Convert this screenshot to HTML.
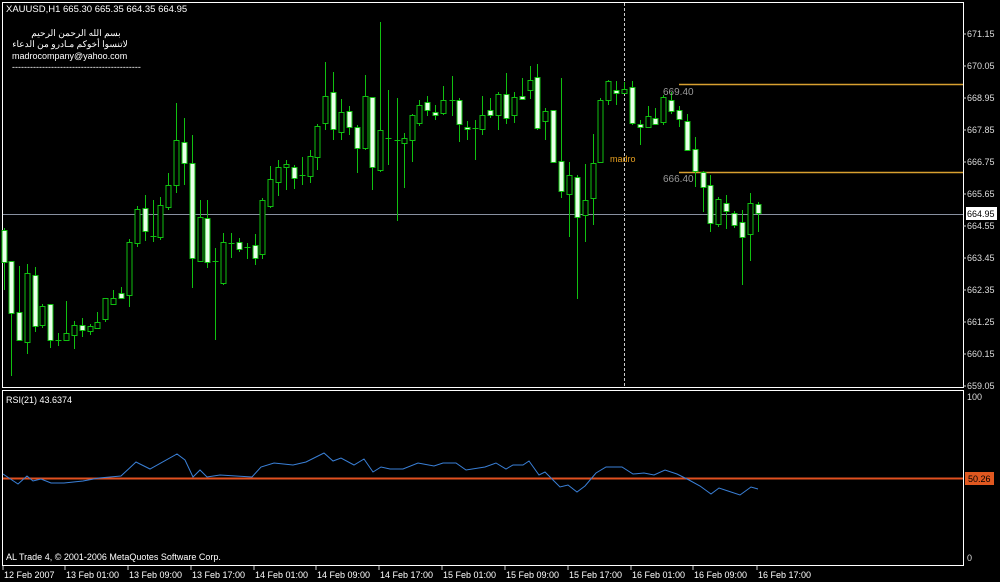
<!DOCTYPE html>
<html><head><meta charset="utf-8"><style>
html,body{margin:0;padding:0;background:#000;width:1000px;height:582px;overflow:hidden}
svg{display:block}
text{font-family:"Liberation Sans","Noto Sans CJK SC",sans-serif;font-size:9px;fill:#fff}
.ax{font-size:9px;fill:#ddd}
.w rect{fill:#eaffea}
.h rect{fill:#000}
</style></head><body>
<svg width="1000" height="582" viewBox="0 0 1000 582">
<rect x="0" y="0" width="1000" height="582" fill="#000"/>
<rect x="2.5" y="2.5" width="961" height="385" fill="none" stroke="#fff" stroke-width="1"/>
<rect x="2.5" y="390.5" width="961" height="175" fill="none" stroke="#fff" stroke-width="1"/>
<line x1="624.5" y1="3" x2="624.5" y2="387" stroke="#ccc" stroke-width="1" stroke-dasharray="3,2"/>
<line x1="3" y1="214.5" x2="963" y2="214.5" stroke="#8890a0" stroke-width="1"/>
<line x1="679" y1="84.5" x2="963" y2="84.5" stroke="#d8a030" stroke-width="1.5"/>
<line x1="679" y1="172.5" x2="963" y2="172.5" stroke="#d8a030" stroke-width="1.5"/>
<g stroke="#10c010" stroke-width="1">
<path fill="none" d="M4.5 228V290 M11.5 261V376 M19.5 266V341 M27.5 264V354 M35.5 267V332 M42.5 304V328 M50.5 304V348 M58.5 333V346 M66.5 301V340 M74.5 321V349 M82.5 318V337 M90.5 324V335 M97.5 312V329 M105.5 298V322 M113.5 290V305 M121.5 287V299 M129.5 239V307 M137.5 206V247 M145.5 195V241 M153.5 200V242 M160.5 197V240 M168.5 173V210 M176.5 103V193 M184.5 118V185 M192.5 135V288 M200.5 200V262 M207.5 200V268 M215.5 248V340 M223.5 233V285 M231.5 233V258 M239.5 238V252 M247.5 243V259 M255.5 234V265 M262.5 198V259 M270.5 166V208 M278.5 160V196 M286.5 160V190 M294.5 165V189 M302.5 157V185 M310.5 150V183 M317.5 124V170 M325.5 62V130 M333.5 72V140 M341.5 99V140 M349.5 106V135 M357.5 125V173 M365.5 75V150 M372.5 97V190 M380.5 22V172 M388.5 90V165 M397.5 98V221 M404.5 133V188 M412.5 114V162 M419.5 100V126 M427.5 96V116 M435.5 105V120 M443.5 86V115 M452.5 76V116 M459.5 98V142 M467.5 121V140 M475.5 120V160 M482.5 96V135 M490.5 98V118 M498.5 92V130 M506.5 73V124 M514.5 92V123 M522.5 78V99 M530.5 66V99 M537.5 64V130 M545.5 108V140 M553.5 110V162 M561.5 78V198 M569.5 162V237 M577.5 175V299 M585.5 164V242 M593.5 134V225 M600.5 98V162 M608.5 80V105 M616.5 81V105 M624.5 82V90 M632.5 81V125 M640.5 120V145 M648.5 106V128 M655.5 108V125 M663.5 95V125 M671.5 92V114 M679.5 106V127 M687.5 114V150 M695.5 137V187 M703.5 171V212 M710.5 175V232 M718.5 197V227 M726.5 195V229 M734.5 211V228 M742.5 210V285 M750.5 193V261 M758.5 202V232 M55.5 340.5H61.5 M150.5 236.5H156.5 M212.5 261.5H218.5 M228.5 243.5H234.5 M244.5 247.5H250.5 M299.5 175.5H305.5 M385.5 138.5H391.5 M394.5 140.5H400.5 M449.5 100.5H455.5 M472.5 128.5H478.5"/>
<g class="w">
<rect x="2" y="230.5" width="5" height="32"/><rect x="9" y="261.5" width="5" height="52"/><rect x="17" y="312.5" width="5" height="28"/><rect x="33" y="275.5" width="5" height="51"/><rect x="48" y="304.5" width="5" height="36"/><rect x="80" y="325.5" width="5" height="5"/><rect x="119" y="293.5" width="5" height="5"/><rect x="143" y="208.5" width="5" height="23"/><rect x="182" y="142.5" width="5" height="21"/><rect x="190" y="163.5" width="5" height="95"/><rect x="205" y="218.5" width="5" height="44"/><rect x="237" y="242.5" width="5" height="7"/><rect x="253" y="245.5" width="5" height="13"/><rect x="292" y="167.5" width="5" height="11"/><rect x="331" y="92.5" width="5" height="37"/><rect x="347" y="111.5" width="5" height="16"/><rect x="355" y="127.5" width="5" height="21"/><rect x="370" y="97.5" width="5" height="70"/><rect x="425" y="102.5" width="5" height="8"/><rect x="433" y="112.5" width="5" height="3"/><rect x="457" y="100.5" width="5" height="24"/><rect x="465" y="127.5" width="5" height="2"/><rect x="488" y="110.5" width="5" height="5"/><rect x="504" y="94.5" width="5" height="24"/><rect x="520" y="96.5" width="5" height="3"/><rect x="535" y="77.5" width="5" height="51"/><rect x="551" y="110.5" width="5" height="52"/><rect x="559" y="161.5" width="5" height="30"/><rect x="575" y="177.5" width="5" height="40"/><rect x="614" y="90.5" width="5" height="3"/><rect x="630" y="87.5" width="5" height="36"/><rect x="638" y="124.5" width="5" height="3"/><rect x="653" y="118.5" width="5" height="6"/><rect x="669" y="100.5" width="5" height="11"/><rect x="677" y="110.5" width="5" height="9"/><rect x="685" y="121.5" width="5" height="29"/><rect x="693" y="149.5" width="5" height="22"/><rect x="701" y="172.5" width="5" height="15"/><rect x="708" y="185.5" width="5" height="38"/><rect x="724" y="203.5" width="5" height="8"/><rect x="732" y="213.5" width="5" height="12"/><rect x="740" y="222.5" width="5" height="15"/><rect x="756" y="204.5" width="5" height="9"/>
</g>
<g class="h">
<rect x="25" y="273.5" width="5" height="69"/><rect x="40" y="306.5" width="5" height="19"/><rect x="64" y="333.5" width="5" height="7"/><rect x="72" y="325.5" width="5" height="10"/><rect x="88" y="326.5" width="5" height="5"/><rect x="95" y="322.5" width="5" height="6"/><rect x="103" y="298.5" width="5" height="21"/><rect x="111" y="298.5" width="5" height="6"/><rect x="127" y="242.5" width="5" height="53"/><rect x="135" y="209.5" width="5" height="34"/><rect x="158" y="205.5" width="5" height="32"/><rect x="166" y="185.5" width="5" height="22"/><rect x="174" y="140.5" width="5" height="45"/><rect x="198" y="217.5" width="5" height="44"/><rect x="221" y="242.5" width="5" height="41"/><rect x="260" y="200.5" width="5" height="54"/><rect x="268" y="179.5" width="5" height="27"/><rect x="276" y="167.5" width="5" height="15"/><rect x="284" y="164.5" width="5" height="3"/><rect x="308" y="156.5" width="5" height="20"/><rect x="315" y="126.5" width="5" height="31"/><rect x="323" y="96.5" width="5" height="27"/><rect x="339" y="112.5" width="5" height="20"/><rect x="363" y="96.5" width="5" height="52"/><rect x="378" y="130.5" width="5" height="40"/><rect x="402" y="138.5" width="5" height="5"/><rect x="410" y="115.5" width="5" height="25"/><rect x="417" y="105.5" width="5" height="18"/><rect x="441" y="100.5" width="5" height="13"/><rect x="480" y="115.5" width="5" height="14"/><rect x="496" y="94.5" width="5" height="21"/><rect x="512" y="97.5" width="5" height="18"/><rect x="528" y="80.5" width="5" height="10"/><rect x="543" y="111.5" width="5" height="10"/><rect x="567" y="175.5" width="5" height="19"/><rect x="583" y="200.5" width="5" height="15"/><rect x="591" y="163.5" width="5" height="35"/><rect x="598" y="100.5" width="5" height="62"/><rect x="606" y="81.5" width="5" height="19"/><rect x="622" y="89.5" width="5" height="4"/><rect x="646" y="116.5" width="5" height="11"/><rect x="661" y="97.5" width="5" height="25"/><rect x="716" y="199.5" width="5" height="25"/><rect x="748" y="203.5" width="5" height="31"/>
</g>
</g>
<text x="663" y="95" style="fill:#999;font-size:10px">669.40</text>
<text x="663" y="182" style="fill:#999;font-size:10px">666.40</text>
<text x="610" y="162" style="fill:#e8a020;font-size:9px">madro</text>
<text x="6" y="12" style="font-size:9.5px">XAUUSD,H1  665.30 665.35 664.35 664.95</text>
<text x="76" y="36" text-anchor="middle" style="font-size:9px">بسم الله الرحمن الرحيم</text>
<text x="70" y="47" text-anchor="middle" style="font-size:9px">لاتنسوا أخوكم مـادرو من الدعاء</text>
<text x="12" y="59" style="font-size:9px">madrocompany@yahoo.com</text>
<text x="12" y="70" style="font-size:9px">-------------------------------------------</text>
<g class="ax">
<text x="967" y="37" class="ax">671.15</text><line x1="963" y1="34" x2="966" y2="34" stroke="#ccc"/>
<text x="967" y="69" class="ax">670.05</text><line x1="963" y1="66" x2="966" y2="66" stroke="#ccc"/>
<text x="967" y="101" class="ax">668.95</text><line x1="963" y1="98" x2="966" y2="98" stroke="#ccc"/>
<text x="967" y="133" class="ax">667.85</text><line x1="963" y1="130" x2="966" y2="130" stroke="#ccc"/>
<text x="967" y="165" class="ax">666.75</text><line x1="963" y1="162" x2="966" y2="162" stroke="#ccc"/>
<text x="967" y="197" class="ax">665.65</text><line x1="963" y1="194" x2="966" y2="194" stroke="#ccc"/>
<text x="967" y="229" class="ax">664.55</text><line x1="963" y1="226" x2="966" y2="226" stroke="#ccc"/>
<text x="967" y="261" class="ax">663.45</text><line x1="963" y1="258" x2="966" y2="258" stroke="#ccc"/>
<text x="967" y="293" class="ax">662.35</text><line x1="963" y1="290" x2="966" y2="290" stroke="#ccc"/>
<text x="967" y="325" class="ax">661.25</text><line x1="963" y1="322" x2="966" y2="322" stroke="#ccc"/>
<text x="967" y="357" class="ax">660.15</text><line x1="963" y1="354" x2="966" y2="354" stroke="#ccc"/>
<text x="967" y="389" class="ax">659.05</text><line x1="963" y1="386" x2="966" y2="386" stroke="#ccc"/>
</g>
<rect x="966" y="207" width="31" height="13" fill="#fff"/>
<text x="967" y="217" style="fill:#000;font-size:9px">664.95</text>
<text x="6" y="403">RSI(21) 43.6374</text>
<text x="967" y="400" class="ax">100</text>
<text x="967" y="561" class="ax">0</text>
<line x1="3" y1="478.5" x2="963" y2="478.5" stroke="#e05020" stroke-width="2"/>
<rect x="965" y="472" width="29" height="13" fill="#e05820"/>
<text x="968" y="482" style="fill:#000;font-size:9px">50.26</text>
<polyline fill="none" stroke="#3a80d8" stroke-width="1" points="3,474 18,484 27,476 33,481 41,479 51,483 64,483 83,481 99,478 121,476 136,462 150,469 177,454 185,460 193,477 200,470 207,477 220,475 252,477 261,467 274,463 293,465 306,462 324,453 333,461 341,458 354,465 364,459 373,472 381,467 390,469 403,469 418,463 434,466 443,463 456,463 466,470 485,467 496,463 506,469 513,465 523,465 529,461 539,475 545,472 560,487 568,485 577,492 585,486 596,473 606,467 622,467 633,474 644,473 654,475 665,470 677,474 689,480 700,486 711,494 719,488 728,491 740,495 751,487 758,489"/>
<text x="6" y="560">AL Trade 4, © 2001-2006 MetaQuotes Software Corp.</text>
<g stroke="#ccc">
<line x1="3" y1="566" x2="3" y2="570"/><line x1="65" y1="566" x2="65" y2="570"/><line x1="128" y1="566" x2="128" y2="570"/><line x1="191" y1="566" x2="191" y2="570"/><line x1="254" y1="566" x2="254" y2="570"/><line x1="316" y1="566" x2="316" y2="570"/><line x1="379" y1="566" x2="379" y2="570"/><line x1="442" y1="566" x2="442" y2="570"/><line x1="505" y1="566" x2="505" y2="570"/><line x1="568" y1="566" x2="568" y2="570"/><line x1="631" y1="566" x2="631" y2="570"/><line x1="693" y1="566" x2="693" y2="570"/><line x1="757" y1="566" x2="757" y2="570"/>
</g>
<g class="ax">
<text x="4" y="578">12 Feb 2007</text>
<text x="66" y="578">13 Feb 01:00</text>
<text x="129" y="578">13 Feb 09:00</text>
<text x="192" y="578">13 Feb 17:00</text>
<text x="255" y="578">14 Feb 01:00</text>
<text x="317" y="578">14 Feb 09:00</text>
<text x="380" y="578">14 Feb 17:00</text>
<text x="443" y="578">15 Feb 01:00</text>
<text x="506" y="578">15 Feb 09:00</text>
<text x="569" y="578">15 Feb 17:00</text>
<text x="632" y="578">16 Feb 01:00</text>
<text x="694" y="578">16 Feb 09:00</text>
<text x="758" y="578">16 Feb 17:00</text>
</g>
</svg>
</body></html>
